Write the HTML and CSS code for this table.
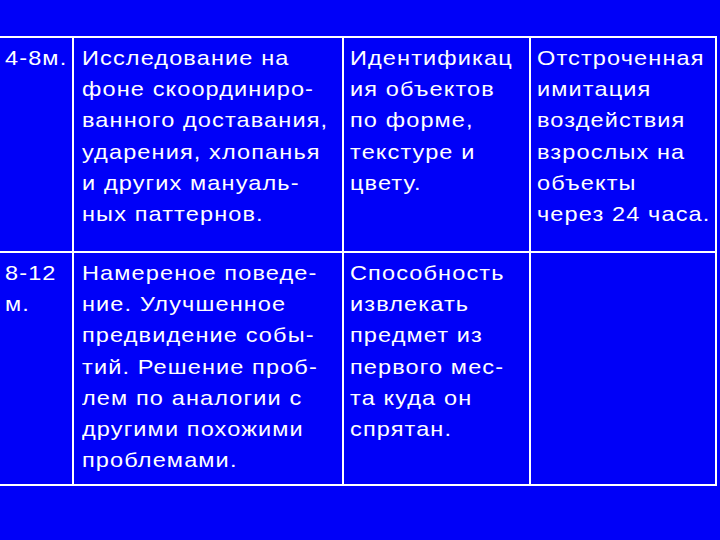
FILE: index.html
```html
<!DOCTYPE html>
<html lang="ru">
<head>
<meta charset="utf-8">
<link rel="stylesheet" href="styles.css">
</head>
<body>
<div class="table">
  <div class="cell c1 r1"><span class="txt">4-8м.</span></div>
  <div class="cell c2 r1"><span class="txt">Исследование на<br>фоне скоординиро-<br>ванного доставания,<br>ударения, хлопанья<br>и других мануаль-<br>ных паттернов.</span></div>
  <div class="cell c3 r1"><span class="txt">Идентификац<br>ия объектов<br>по форме,<br>текстуре и<br>цвету.</span></div>
  <div class="cell c4 r1"><span class="txt">Отстроченная<br>имитация<br>воздействия<br>взрослых на<br>объекты<br>через 24 часа.</span></div>
  <div class="cell c1 r2"><span class="txt">8-12<br>м.</span></div>
  <div class="cell c2 r2"><span class="txt">Намереное поведе-<br>ние. Улучшенное<br>предвидение собы-<br>тий. Решение проб-<br>лем по аналогии с<br>другими похожими<br>проблемами.</span></div>
  <div class="cell c3 r2"><span class="txt">Способность<br>извлекать<br>предмет из<br>первого мес-<br>та куда он<br>спрятан.</span></div>
  <div class="cell c4 r2"></div>
</div>
</body>
</html>
```

FILE: styles.css
```css
html, body {
  margin: 0;
  padding: 0;
  background: #0000f8;
  width: 720px;
  height: 540px;
  overflow: hidden;
}
.table {
  margin-top: 36px;
  width: 717px;
  display: grid;
  grid-template-columns: 74px 270px 187px 186px;
  grid-template-rows: 213px 233px;
  border-top: 2px solid #fff;
  border-bottom: 2px solid #fff;
  box-sizing: border-box;
  height: 450px;
  font-family: "Liberation Sans", Arial, sans-serif;
  font-size: 21px;
  line-height: 31.2px;
  letter-spacing: 1px;
  color: #fff;
}
.cell {
  box-sizing: border-box;
  border-right: 2px solid #fff;
  white-space: nowrap;
}
.txt {
  display: block;
  transform: scaleX(1.12);
  transform-origin: left top;
}
.r1 { padding-top: 4px; }
.r2 { padding-top: 4px; border-top: 2px solid #fff; }
.c1 { padding-left: 5px; }
.c2 { padding-left: 8px; }
.c3 { padding-left: 6px; }
.c4 { padding-left: 6px; }
```
